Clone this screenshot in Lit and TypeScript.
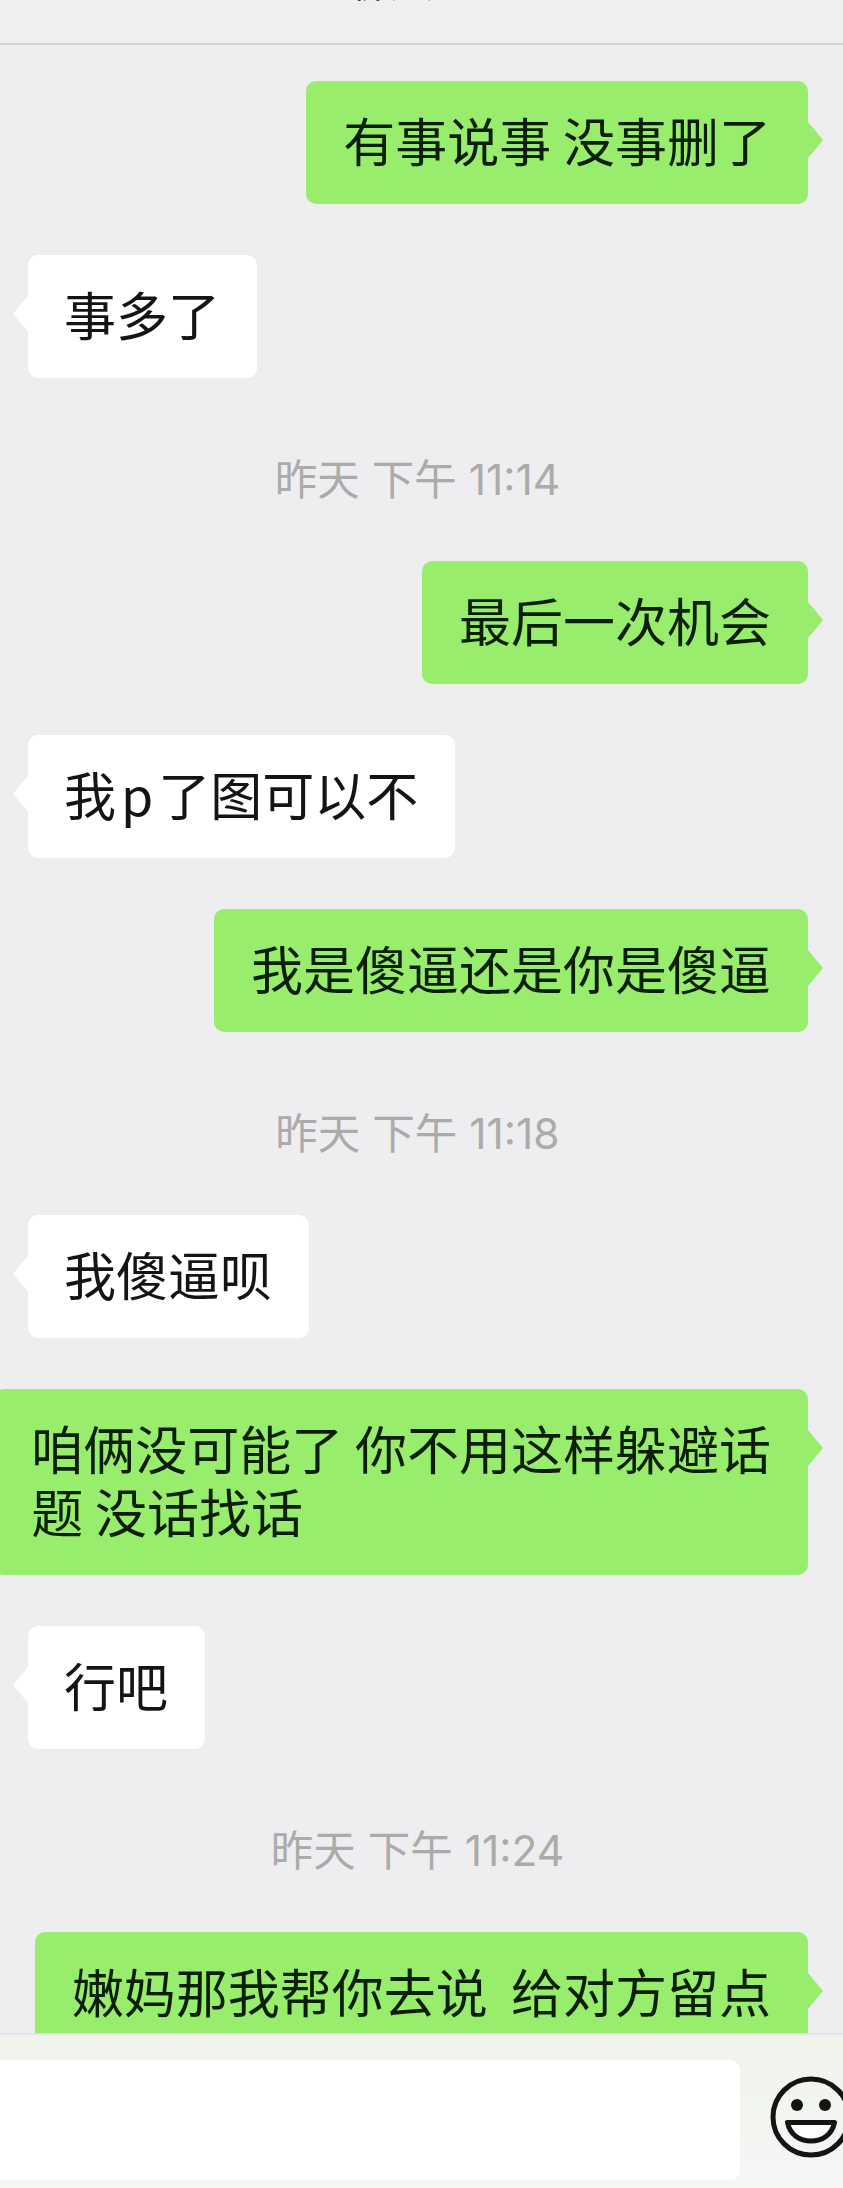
import { LitElement, html, css, TemplateResult } from "lit";
import { customElement } from "lit/decorators.js";

type Item =
  | { kind: "time"; text: string }
  | { kind: "me" | "them"; lines: TemplateResult | string };

const ITEMS: Item[] = [
  { kind: "me", lines: "有事说事 没事删了" },
  { kind: "them", lines: "事多了" },
  { kind: "time", text: "昨天 下午 11:14" },
  { kind: "me", lines: "最后一次机会" },
  { kind: "them", lines: html`我<span class="latin">p</span>了图可以不` },
  { kind: "me", lines: "我是傻逼还是你是傻逼" },
  { kind: "time", text: "昨天 下午 11:18" },
  { kind: "them", lines: "我傻逼呗" },
  { kind: "me", lines: "咱俩没可能了 你不用这样躲避话\n题 没话找话" },
  { kind: "them", lines: "行吧" },
  { kind: "time", text: "昨天 下午 11:24" },
  { kind: "me", lines: "嫩妈那我帮你去说  给对方留点\n面子吧" },
];

@customElement("app-root")
export class AppRoot extends LitElement {
  static styles = css`
    :host {
      display: block;
      position: relative;
      width: 843px;
      height: 2188px;
      overflow: hidden;
      background: #eeeef0;
      font-family: "Noto Sans CJK SC", "Noto Sans", sans-serif;
    }
    .header {
      height: 43px;
      background: #efefef;
      border-bottom: 2px solid #d6d6d6;
      box-sizing: content-box;
      overflow: hidden;
      display: flex;
      justify-content: center;
      padding-right: 64px;
    }
    .title {
      font-size: 44px;
      line-height: 60px;
      margin-top: -52px;
      color: #111;
      height: 60px;
    }
    .list {
      display: flex;
      flex-direction: column;
      margin-top: -15px;
    }
    .row {
      display: flex;
      margin-top: 51px;
    }
    .row.me {
      justify-content: flex-end;
      padding-right: 35px;
    }
    .row.them {
      justify-content: flex-start;
      padding-left: 28px;
    }
    .bubble {
      position: relative;
      flex: none;
      padding: 27px 37px 33px;
      border-radius: 10px;
      font-size: 52px;
      line-height: 63px;
      white-space: pre;
      color: #141414;
    }
    .them .bubble {
      background: #ffffff;
      padding-left: 36px;
      padding-right: 37px;
    }
    .me .bubble {
      background: #99ed6d;
      color: #0c1f06;
    }
    .latin {
      margin: 0 5px;
    }
    .bubble::after {
      content: "";
      position: absolute;
      top: 41px;
      width: 15px;
      height: 36px;
      background: inherit;
    }
    .me .bubble::after {
      left: 100%;
      clip-path: polygon(0 0, 100% 50%, 0 100%);
    }
    .them .bubble::after {
      right: 100%;
      clip-path: polygon(100% 0, 0 50%, 100% 100%);
    }
    .time {
      margin-top: 72px;
      height: 60px;
      line-height: 60px;
      text-align: center;
      padding-right: 8px;
      font-family: "Inter", "Noto Sans CJK SC", sans-serif;
      font-size: 42.5px;
      color: #ababab;
      white-space: pre;
    }
    .footer {
      position: absolute;
      left: 0;
      right: 0;
      bottom: 0;
      height: 155px;
      box-sizing: border-box;
      border-top: 2px solid #e2e3e2;
      background: linear-gradient(180deg, #f0f4ec 0%, #f2f5f0 50%, #f6f6f6 100%);
      display: flex;
      align-items: flex-start;
      padding-top: 25px;
      overflow: hidden;
    }
    .input {
      flex: none;
      width: 760px;
      margin-left: -20px;
      height: 120px;
      background: #fff;
      border-radius: 10px;
    }
    .emoji {
      flex: none;
      width: 84px;
      height: 84px;
      margin-left: 29px;
      margin-top: 15px;
    }
  `;

  render() {
    return html`
      <div class="header"><div class="title">聊天</div></div>
      <div class="list">
        ${ITEMS.map((item) =>
          item.kind === "time"
            ? html`<div class="time">${item.text}</div>`
            : html`<div class="row ${item.kind}">
                <div class="bubble">${item.lines}</div>
              </div>`
        )}
      </div>
      <div class="footer">
        <div class="input"></div>
        <svg class="emoji" viewBox="0 0 84 84" fill="none" stroke="#141414">
          <circle cx="42" cy="42" r="38" stroke-width="5" />
          <circle cx="28" cy="30" r="6" fill="#141414" stroke="none" />
          <circle cx="56" cy="30" r="6" fill="#141414" stroke="none" />
          <path
            d="M18.5 47.5 H65.5 C63 60 53 66 42 66 C31 66 21 60 18.5 47.5 Z"
            fill="#fff"
            stroke-width="5"
            stroke-linejoin="round"
          />
        </svg>
      </div>
    `;
  }
}
